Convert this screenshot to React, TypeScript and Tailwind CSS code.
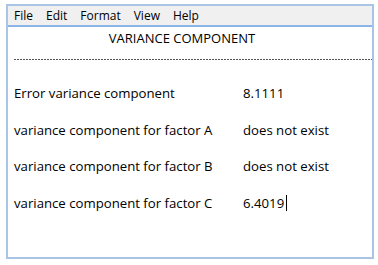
export default function App() {
  const rows = [
    { label: "Error variance component", value: "8.1111" },
    { label: "variance component for factor A", value: "does not exist" },
    { label: "variance component for factor B", value: "does not exist" },
    { label: "variance component for factor C", value: "6.4019", cursor: true },
  ];

  return (
    <div className="w-[378px] h-[265px] bg-white pt-[4px] pl-[6px]" style={{ fontFamily: '"Open Sans", sans-serif' }}>
      <div className="w-[368px] h-[255px] border-2 border-[#a9c4e5] flex flex-col">
        <div className="h-[21px] bg-[#f0f0f0] border-b-2 border-[#8db4e8] flex items-center gap-[13px] pl-[6px] text-[12px] text-black">
          <span>File</span>
          <span>Edit</span>
          <span>Format</span>
          <span>View</span>
          <span>Help</span>
        </div>
        <div className="text-center text-[13px] text-black mt-[2px] pr-[16px] leading-[18px]">VARIANCE COMPONENT</div>
        <div className="ml-[6px] mt-[12px] h-[1px] bg-[repeating-linear-gradient(90deg,#555_0_2px,transparent_2px_3px)]" />
        <div className="flex flex-col gap-[18px] mt-[24px] pl-[6px] text-[13.2px] text-black leading-[18.5px]">
          {rows.map((r) => (
            <div key={r.label} className="flex">
              <span className="w-[229px]">{r.label}</span>
              <span className="flex items-center">
                {r.value}
                {r.cursor && <span className="inline-block w-[1px] h-[16px] bg-black ml-[2px]" />}
              </span>
            </div>
          ))}
        </div>
      </div>
    </div>
  );
}
